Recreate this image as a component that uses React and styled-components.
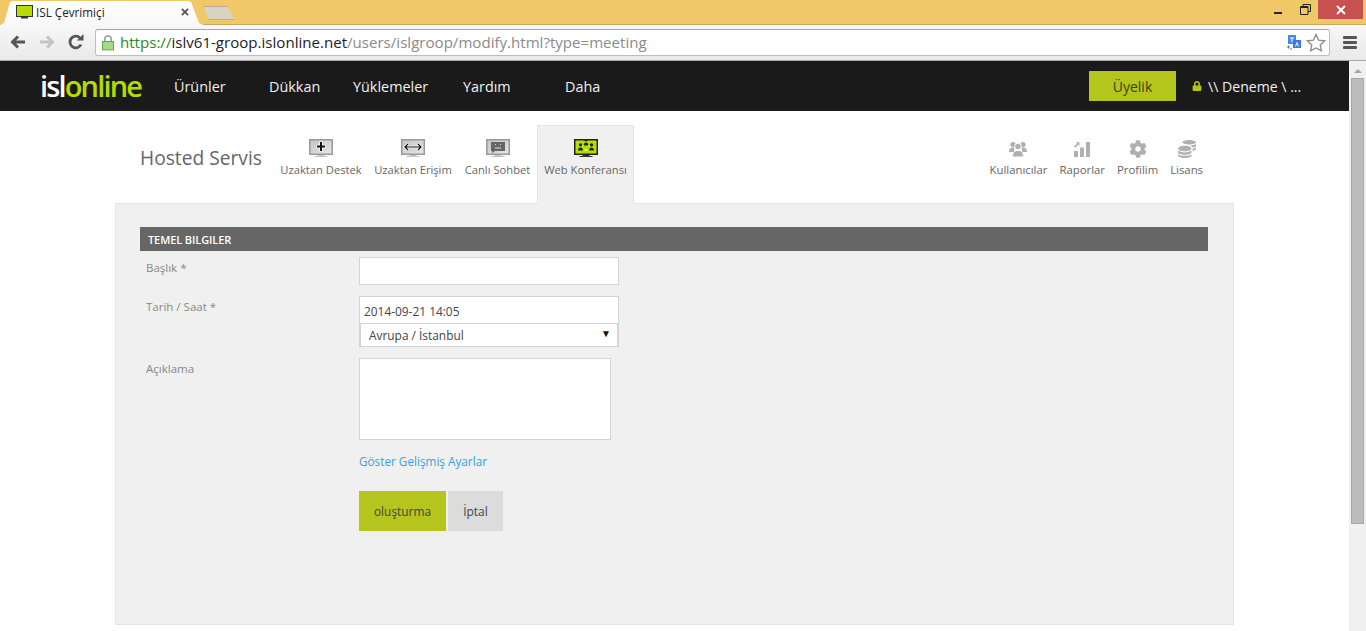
import styled, { createGlobalStyle } from "styled-components";
import { FaCog, FaCoins, FaLock } from "react-icons/fa";

const GlobalStyle = createGlobalStyle`
  html, body { margin: 0; padding: 0; overflow: hidden; background: #fff; }
  body { font-family: "Open Sans", "Liberation Sans", sans-serif; }
  * { box-sizing: border-box; }
`;

const Shell = styled.div`
  width: 1366px;
  height: 631px;
  display: flex;
  flex-direction: column;
  overflow: hidden;
`;

/* browser chrome */
const TabStrip = styled.div`
  height: 25px;
  background: #f0c868;
  border-bottom: 1px solid #c8a85c;
  display: flex;
  align-items: flex-end;
  flex-shrink: 0;
`;
const BrowserTab = styled.div`
  width: 204px;
  height: 24px;
  margin-bottom: -1px;
  padding: 0 15px 2px 16px;
  background: linear-gradient(#fff, #f8f8f8);
  clip-path: polygon(0 100%, 4px 92%, 10px 4%, 13px 0, 188px 0, 191px 4%, 199px 92%, 204px 100%);
  display: flex;
  align-items: center;
  gap: 3px;
  font: 11.7px "Open Sans", sans-serif;
  color: #222;
`;
const TabTitle = styled.span`
  flex: 1;
`;
const TabClose = styled.svg`
  width: 8px;
  height: 8px;
`;
const NewTab = styled.div`
  width: 32px;
  height: 14px;
  margin: 0 0 4px -1px;
  background: #d9d4c2;
  border: 1px solid #b9ae90;
  clip-path: polygon(0 0, 24px 0, 32px 100%, 6px 100%);
`;
const WindowButtons = styled.div`
  margin-left: auto;
  height: 24px;
  align-self: flex-start;
  display: flex;
  align-items: flex-start;
`;
const WinButton = styled.div`
  width: ${(p) => p.$w}px;
  height: ${(p) => (p.$close ? 19 : 18)}px;
  background: ${(p) => (p.$close ? "#c75050" : "transparent")};
  display: flex;
  align-items: center;
  justify-content: center;
`;
const Toolbar = styled.div`
  height: 36px;
  background: linear-gradient(#f7f7f7, #e9e9e9);
  border-bottom: 1px solid #a8a8a8;
  display: flex;
  align-items: center;
  padding: 0 0 1px 0;
  flex-shrink: 0;
`;
const NavIcon = styled.svg`
  width: 18px;
  height: 18px;
  margin-left: ${(p) => p.$ml}px;
  flex-shrink: 0;
`;
const AddressBar = styled.div`
  width: 1235px;
  height: 27px;
  margin-left: 10px;
  background: #fff;
  border: 1px solid #bdbdbd;
  border-top-color: #a5a5a5;
  border-radius: 3px;
  display: flex;
  align-items: center;
  padding: 0 3px 0 6px;
`;
const Url = styled.div`
  flex: 1;
  margin-left: 6px;
  font: 15.08px "Open Sans", sans-serif;
  white-space: nowrap;
  color: #222;
`;
const UrlScheme = styled.span`
  color: #2a8a22;
`;
const UrlPath = styled.span`
  color: #8b8b8b;
`;
const Hamburger = styled.div`
  margin-left: 13px;
  width: 14px;
  display: flex;
  flex-direction: column;
  gap: 2px;
`;
const HamburgerBar = styled.span`
  height: 3px;
  background: #555;
  border-radius: 1px;
`;

/* page */
const Viewport = styled.div`
  flex: 1;
  min-height: 0;
  display: flex;
`;
const Page = styled.div`
  flex: 1;
  min-width: 0;
  display: flex;
  flex-direction: column;
`;
const Scrollbar = styled.div`
  width: 17px;
  padding: 8px 2px 0;
  background: #f0f0f0;
  display: flex;
  flex-direction: column;
  align-items: center;
`;
const ScrollArrow = styled.div`
  width: 0;
  height: 0;
  border-left: 4px solid transparent;
  border-right: 4px solid transparent;
  border-bottom: 4px solid #a6a6a6;
`;
const ScrollThumb = styled.div`
  width: 13px;
  height: 446px;
  margin-top: 5px;
  background: #bcbcbc;
  border: 1px solid #a8a8a8;
`;
const TopBar = styled.header`
  height: 50px;
  background: #1a1a1a;
  display: flex;
  align-items: center;
  padding-left: 40px;
  flex-shrink: 0;
`;
const Logo = styled.div`
  width: 134px;
  font: 600 29px/1 "Open Sans", sans-serif;
  letter-spacing: -1.85px;
  color: #fff;
  margin-top: -2px;
`;
const LogoAccent = styled.span`
  color: #b4dc00;
`;
const MenuItem = styled.a`
  width: ${(p) => p.$w}px;
  font-size: 14.4px;
  font-weight: 500;
  color: #f0f0f0;
`;
const MemberButton = styled.a`
  width: 87px;
  height: 30px;
  margin-left: 404px;
  background: #b4c51c;
  color: #3b4208;
  font-size: 14px;
  display: flex;
  align-items: center;
  justify-content: center;
`;
const UserBox = styled.div`
  margin-left: 16px;
  display: flex;
  align-items: center;
  gap: 6px;
  font-size: 14.1px;
  font-weight: 500;
  color: #f0f0f0;
`;
const Container = styled.main`
  width: 1119px;
  margin: 14px 0 0 115px;
`;
const SubNav = styled.nav`
  height: 79px;
  display: flex;
  position: relative;
  z-index: 1;
  margin-bottom: -1px;
`;
const ServiceTitle = styled.h1`
  margin: 0;
  padding: 19px 0 0 25px;
  width: 159px;
  font-size: 19.2px;
  line-height: 27px;
  font-weight: 400;
  color: #666;
`;
const ProductTab = styled.a`
  width: ${(p) => p.$w}px;
  height: 79px;
  padding-top: 13px;
  display: flex;
  flex-direction: column;
  align-items: center;
  font-size: 11.2px;
  line-height: 15px;
  color: #666;
  white-space: nowrap;
  background: ${(p) => (p.$active ? "#f0f0f0" : "transparent")};
  border: 1px solid ${(p) => (p.$active ? "#e4e4e4" : "transparent")};
  border-bottom: 0;
`;
const ProductIcon = styled.svg`
  width: 24px;
  height: 20px;
  margin-bottom: 3px;
`;
const ToolLinks = styled.div`
  margin-left: auto;
  margin-right: 31px;
  display: flex;
  gap: 12px;
`;
const ToolLink = styled.a`
  padding-top: 15px;
  display: flex;
  flex-direction: column;
  align-items: center;
  font-size: 11.35px;
  line-height: 15px;
  color: #666;
  svg {
    width: 18px;
    height: 18px;
    margin-bottom: 4px;
    color: #b0b0b0;
  }
`;
const Panel = styled.section`
  height: 422px;
  background: #f0f0f0;
  border: 1px solid #e4e4e4;
  padding: 23px 25px 0 24px;
`;
const SectionHead = styled.h2`
  margin: 0 0 6px;
  height: 24px;
  padding-left: 8px;
  background: #666;
  color: #fff;
  font-size: 11px;
  font-weight: 600;
  line-height: 25px;
  letter-spacing: -0.1px;
`;
const FormRow = styled.div`
  display: flex;
  margin-bottom: ${(p) => p.$mb ?? 11}px;
`;
const Label = styled.label`
  width: 219px;
  padding: 3px 0 0 6px;
  font-size: 11.5px;
  line-height: 16px;
  color: #888;
`;
const TextInput = styled.input`
  width: 260px;
  height: 28px;
  padding: 0 4px;
  background: #fff;
  border: 1px solid #d4d4d4;
  font: 11px "Open Sans", sans-serif;
  color: #444;
  outline: 0;
  display: block;
`;
const DateBlock = styled.div`
  width: 260px;
  border: 1px solid #d4d4d4;
  background: #fff;
`;
const DateValue = styled.div`
  height: 26px;
  padding: 5px 4px 0;
  font-size: 11.9px;
  line-height: 18px;
  color: #444;
`;
const SelectBox = styled.div`
  height: 23px;
  border-top: 1px solid #d4d4d4;
  border-left: 1px solid #d4d4d4;
  border-right: 1px solid #d4d4d4;
  padding: 2px 6px 0 8px;
  background: #fff;
  display: flex;
  justify-content: space-between;
  font-size: 11.9px;
  line-height: 18px;
  color: #444;
`;
const SelectCaret = styled.span`
  font-size: 10px;
  line-height: 15px;
  color: #111;
`;
const TextArea = styled.textarea`
  display: block;
  width: 252px;
  height: 82px;
  background: #fff;
  border: 1px solid #d4d4d4;
  outline: 0;
  resize: none;
`;
const ActionColumn = styled.div`
  margin-left: 219px;
`;
const AdvancedLink = styled.a`
  display: block;
  height: 15px;
  font-size: 11.75px;
  line-height: 14px;
  color: #35a3e0;
  margin-bottom: 22px;
`;
const Buttons = styled.div`
  display: flex;
  gap: 2px;
`;
const Button = styled.button`
  height: 40px;
  width: ${(p) => p.$w}px;
  padding: 0;
  border: 0;
  background: ${(p) => (p.$primary ? "#b5c51e" : "#dcdcdc")};
  color: #444;
  font: 11.9px "Open Sans", sans-serif;
`;

function MonitorIcon({ active, children }) {
  const frame = active ? "#222" : "#9a9a9a";
  return (
    <ProductIcon viewBox="0 0 24 20">
      <defs>
        <linearGradient id="screen" x1="0" y1="0" x2="1" y2="1">
          <stop offset="0" stopColor="#c4c4c4" />
          <stop offset="1" stopColor="#e6e6e6" />
        </linearGradient>
      </defs>
      <rect x="0.75" y="0.75" width="22.5" height="14.5" fill={active ? "#b4e000" : "url(#screen)"} stroke={frame} strokeWidth="1.5" />
      <path d="M8.5 16h7v1h3v1h-13v-1h3z" fill={active ? "#333" : "#c4c4c4"} />
      {children}
    </ProductIcon>
  );
}

function Person({ x, y }) {
  return <path d={`M${x} ${y}a1.6 1.6 0 1 1 .01 0zM${x - 2.5} ${y + 4}q.2-3 2.5-3t2.5 3z`} fill="#222" />;
}

export default function App() {
  return (
    <Shell>
      <GlobalStyle />
      <TabStrip>
        <BrowserTab>
          <svg width="17" height="15" viewBox="0 0 17 15">
            <rect x="0.5" y="0.5" width="16" height="11" fill="#b9dc00" stroke="#333" />
            <path d="M5 12h7v1.5H5z" fill="#333" />
          </svg>
          <TabTitle>ISL Çevrimiçi</TabTitle>
          <TabClose viewBox="0 0 9 9">
            <path d="M1 1l7 7M8 1l-7 7" stroke="#555" strokeWidth="2" />
          </TabClose>
        </BrowserTab>
        <NewTab />
        <WindowButtons>
          <WinButton $w={27}>
            <svg width="9" height="9" viewBox="0 0 9 9"><path d="M0 7h8v2H0z" fill="#222" /></svg>
          </WinButton>
          <WinButton $w={26}>
            <svg width="11" height="11" viewBox="0 0 11 11">
              <path d="M3 2.5V.5h7.5v7H8M.5 2.5h7.5v8H.5z" fill="none" stroke="#222" />
              <path d="M1 2h7v2H1z" fill="#222" />
            </svg>
          </WinButton>
          <WinButton $w={45} $close>
            <svg width="10" height="10" viewBox="0 0 10 10">
              <path d="M1 1l8 8M9 1l-8 8" stroke="#fff" strokeWidth="2" />
            </svg>
          </WinButton>
          <WinButton $w={3} />
        </WindowButtons>
      </TabStrip>
      <Toolbar>
        <NavIcon $ml={9} viewBox="0 0 18 18">
          <path d="M16 9H4M9 3.5L3.5 9 9 14.5" fill="none" stroke="#555" strokeWidth="3" />
        </NavIcon>
        <NavIcon $ml={11} viewBox="0 0 18 18">
          <path d="M2 9h12M9 3.5L14.5 9 9 14.5" fill="none" stroke="#c4c4c4" strokeWidth="3" />
        </NavIcon>
        <NavIcon $ml={11} viewBox="0 0 18 18">
          <path d="M14 11.5A5.8 5.8 0 1 1 13 5" fill="none" stroke="#555" strokeWidth="2.8" />
          <path d="M10 7.5h6.5V1z" fill="#555" />
        </NavIcon>
        <AddressBar>
          <svg width="12" height="17" viewBox="0 0 13 17">
            <path d="M3 8V5a3.5 3.5 0 0 1 7 0v3" fill="none" stroke="#999" strokeWidth="1.6" />
            <rect x="0.5" y="7.5" width="12" height="9" fill="#a8d88a" stroke="#5f9c45" />
          </svg>
          <Url>
            <UrlScheme>https://</UrlScheme>islv61-groop.islonline.net<UrlPath>/users/islgroop/modify.html?type=meeting</UrlPath>
          </Url>
          <svg width="14" height="15" viewBox="0 0 14 15">
            <rect x="1" y="0" width="8" height="9" fill="#4a86e8" />
            <rect x="6" y="5" width="8" height="8" fill="#3b78e7" />
            <path d="M8.5 11.5l1.5-4 1.5 4M3 3h4M5 3v4" fill="none" stroke="#fff" />
            <path d="M0 12h3M1.5 10.5v3M3 14h2" stroke="#3b78e7" />
          </svg>
          <svg width="20" height="19" viewBox="0 0 20 19" style={{ marginLeft: 5 }}>
            <path d="M10 1.5l2.6 5.6 6 .7-4.4 4.1 1.2 6L10 15l-5.4 2.9 1.2-6L1.4 7.8l6-.7z" fill="#fff" stroke="#8c8c8c" strokeWidth="1.3" />
          </svg>
        </AddressBar>
        <Hamburger>
          <HamburgerBar />
          <HamburgerBar />
          <HamburgerBar />
        </Hamburger>
      </Toolbar>
      <Viewport>
        <Page>
          <TopBar>
            <Logo>isl<LogoAccent>online</LogoAccent></Logo>
            <MenuItem $w={95}>Ürünler</MenuItem>
            <MenuItem $w={84}>Dükkan</MenuItem>
            <MenuItem $w={110}>Yüklemeler</MenuItem>
            <MenuItem $w={102}>Yardım</MenuItem>
            <MenuItem $w={120}>Daha</MenuItem>
            <MemberButton>Üyelik</MemberButton>
            <UserBox>
              <FaLock size={10} color="#b4c51c" />
              <span>\\ Deneme \ ...</span>
            </UserBox>
          </TopBar>
          <Container>
            <SubNav>
              <ServiceTitle>Hosted Servis</ServiceTitle>
              <ProductTab $w={94}>
                <MonitorIcon>
                  <path d="M12 2.500v10M7.500 7.500h9" stroke="#fff" strokeWidth="3.600" />
                  <path d="M12 3v9M8 7.500h8" stroke="#111" strokeWidth="2" />
                </MonitorIcon>
                Uzaktan Destek
              </ProductTab>
              <ProductTab $w={90}>
                <MonitorIcon>
                  <path d="M4 8h16M7 5L4 8l3 3M17 5l3 3-3 3" fill="none" stroke="#fff" strokeWidth="2.500" />
                  <path d="M4 8h16M7 5L4 8l3 3M17 5l3 3-3 3" fill="none" stroke="#111" strokeWidth="1.200" />
                </MonitorIcon>
                Uzaktan Erişim
              </ProductTab>
              <ProductTab $w={79}>
                <MonitorIcon>
                  <path d="M5 3h14v9H9l-3 2v-2H5z" fill="#666" />
                  <path d="M9 5.500h1M14 5.500h1M9 9h6" stroke="#ddd" />
                </MonitorIcon>
                Canlı Sohbet
              </ProductTab>
              <ProductTab $w={97} $active>
                <MonitorIcon active>
                  <Person x={12} y={2.500} />
                  <Person x={6.500} y={7.500} />
                  <Person x={17.500} y={7.500} />
                  <path d="M8.500 6.500h1M14.500 6.500h1M10.500 11h3" stroke="#fff" />
                </MonitorIcon>
                Web Konferansı
              </ProductTab>
              <ToolLinks>
                <ToolLink>
                  <svg viewBox="0 0 18 18" fill="currentColor">
                    <circle cx="4" cy="4.500" r="2.600" />
                    <circle cx="14" cy="4.500" r="2.600" />
                    <path d="M0 12c0-3.500 1.500-4.500 4-4.500.7 0 1.300.1 1.800.3C5 9 5 10.500 5 12z M18 12c0-3.500-1.500-4.500-4-4.500-.7 0-1.300.1-1.800.3C13 9 13 10.500 13 12z" />
                    <circle cx="9" cy="6.500" r="3.300" stroke="#fff" />
                    <path d="M3.500 17c0-5 2-6.500 5.500-6.500s5.500 1.500 5.500 6.500z" stroke="#fff" />
                  </svg>
                  Kullanıcılar
                </ToolLink>
                <ToolLink>
                  <svg viewBox="0 0 18 18" fill="currentColor">
                    <path d="M1 11h4v6H1zM7 7.500h4V17H7zM13 2h4v15h-4zM1 6.500l3-3-1.200-1.200h3.700V6L5.300 4.800l-3 3z" />
                  </svg>
                  Raporlar
                </ToolLink>
                <ToolLink><FaCog />Profilim</ToolLink>
                <ToolLink><FaCoins />Lisans</ToolLink>
              </ToolLinks>
            </SubNav>
            <Panel>
              <SectionHead>TEMEL BILGILER</SectionHead>
              <FormRow>
                <Label>Başlık *</Label>
                <TextInput />
              </FormRow>
              <FormRow>
                <Label>Tarih / Saat *</Label>
                <DateBlock>
                  <DateValue>2014-09-21 14:05</DateValue>
                  <SelectBox>
                    Avrupa / İstanbul
                    <SelectCaret>▼</SelectCaret>
                  </SelectBox>
                </DateBlock>
              </FormRow>
              <FormRow $mb={14}>
                <Label>Açıklama</Label>
                <TextArea />
              </FormRow>
              <ActionColumn>
                <AdvancedLink>Göster Gelişmiş Ayarlar</AdvancedLink>
                <Buttons>
                  <Button $primary $w={87}>oluşturma</Button>
                  <Button $w={55}>İptal</Button>
                </Buttons>
              </ActionColumn>
            </Panel>
          </Container>
        </Page>
        <Scrollbar>
          <ScrollArrow />
          <ScrollThumb />
        </Scrollbar>
      </Viewport>
    </Shell>
  );
}
